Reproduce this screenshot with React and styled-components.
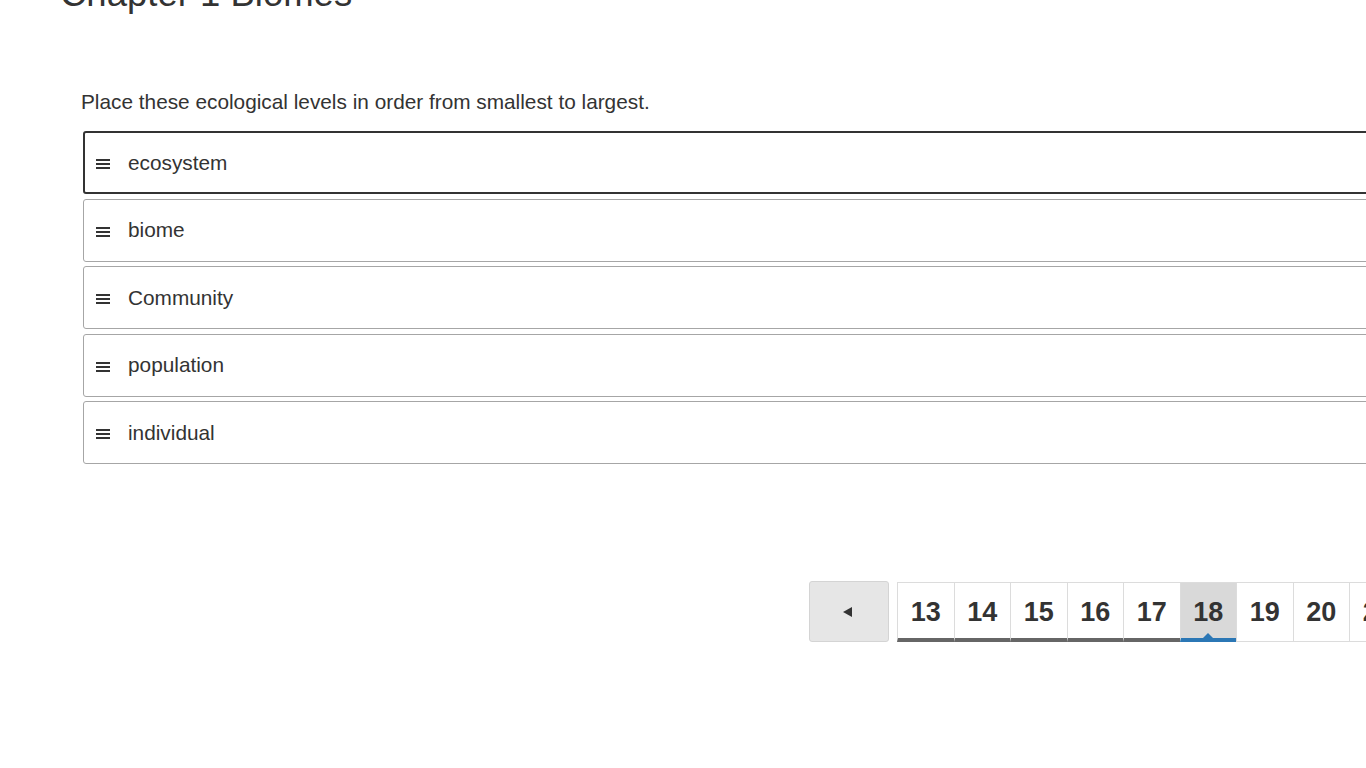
import React from "react";
import styled, { createGlobalStyle } from "styled-components";

const Global = createGlobalStyle`
  html, body {
    margin: 0;
    padding: 0;
    overflow: hidden;
    background: #fff;
  }
  body {
    font-family: "Liberation Sans", Arial, sans-serif;
    color: #333;
  }
`;

const Page = styled.div`
  width: 1500px;
  padding-left: 60px;
  box-sizing: border-box;
`;

const Title = styled.h1`
  margin: -26px 0 0 0;
  font-size: 36.5px;
  line-height: 40px;
  font-weight: 400;
  color: #333;
`;

const Question = styled.section`
  margin-top: 76px;
  padding-left: 21px;
`;

const Prompt = styled.p`
  margin: 0 0 17px 0;
  font-size: 20.8px;
  line-height: 24px;
  color: #333;
`;

const List = styled.ul`
  list-style: none;
  margin: 0 0 0 2px;
  padding: 0;
  width: 1400px;
  display: flex;
  flex-direction: column;
  gap: 4.5px;
`;

const Row = styled.li`
  box-sizing: border-box;
  height: 63px;
  display: flex;
  align-items: center;
  gap: 18px;
  border: ${(p) => (p.$focused ? "2px solid #333" : "1px solid #a6a6a6")};
  border-radius: 3px;
  padding-left: ${(p) => (p.$focused ? "11px" : "12px")};
  background: #fff;
  font-size: 20.8px;
  color: #333;
`;

const Grip = styled.svg`
  flex: none;
  width: 14px;
  height: 10px;
  margin-top: 3px;
`;

const Pager = styled.nav`
  display: flex;
  align-items: flex-start;
  gap: 8px;
  margin-top: 117px;
  padding-left: 749px;
`;

const PrevButton = styled.button`
  flex: none;
  box-sizing: border-box;
  width: 80px;
  height: 61px;
  background: #e6e6e6;
  border: 1px solid #d4d4d4;
  border-radius: 3px;
  display: flex;
  align-items: center;
  justify-content: center;
  padding: 0 4px 0 0;
  color: #333;
`;

const Pages = styled.ol`
  flex: none;
  display: flex;
  list-style: none;
  margin: 1px 0 0 0;
  padding: 0;
`;

const PageItem = styled.li`
  flex: none;
  position: relative;
  box-sizing: border-box;
  width: 57.5px;
  height: 60px;
  margin-left: -1px;
  display: flex;
  align-items: center;
  justify-content: center;
  border: 1px solid #dcdcdc;
  border-bottom: ${(p) =>
    p.$status === "done"
      ? "4px solid #666"
      : p.$status === "current"
      ? "4px solid #2b77b5"
      : "1px solid #dcdcdc"};
  padding-bottom: ${(p) => (p.$status === "upcoming" ? "3px" : "0")};
  padding-top: 3px;
  background: ${(p) => (p.$status === "current" ? "#d9d9d9" : "#fff")};
  font-size: 27px;
  font-weight: 700;
  color: #333;
  &:first-child {
    margin-left: 0;
  }
`;

const Notch = styled.span`
  position: absolute;
  left: 50%;
  bottom: 0;
  transform: translateX(-50%);
  width: 0;
  height: 0;
  border-left: 5px solid transparent;
  border-right: 5px solid transparent;
  border-bottom: 5px solid #2b77b5;
`;

const items = [
  { label: "ecosystem", focused: true },
  { label: "biome" },
  { label: "Community" },
  { label: "population" },
  { label: "individual" },
];

const pages = [13, 14, 15, 16, 17, 18, 19, 20, 21, 22, 23, 24];

function GripIcon() {
  return (
    <Grip viewBox="0 0 14 10" aria-hidden="true">
      <rect x="0" y="0" width="14" height="2" fill="#333" />
      <rect x="0" y="4" width="14" height="2" fill="#333" />
      <rect x="0" y="8" width="14" height="2" fill="#333" />
    </Grip>
  );
}

export default function App() {
  return (
    <Page>
      <Global />
      <Title>Chapter 1 Biomes</Title>
      <Question>
        <Prompt>Place these ecological levels in order from smallest to largest.</Prompt>
        <List>
          {items.map((it) => (
            <Row key={it.label} $focused={it.focused}>
              <GripIcon />
              <span>{it.label}</span>
            </Row>
          ))}
        </List>
      </Question>
      <Pager>
        <PrevButton aria-label="Previous">
          <svg width="11" height="12" viewBox="0 0 11 12">
            <polygon points="10,1 10,11 1,6" fill="#333" />
          </svg>
        </PrevButton>
        <Pages>
          {pages.map((n) => {
            const status = n < 18 ? "done" : n === 18 ? "current" : "upcoming";
            return (
              <PageItem key={n} $status={status}>
                {n}
                {status === "current" && <Notch />}
              </PageItem>
            );
          })}
        </Pages>
      </Pager>
    </Page>
  );
}
